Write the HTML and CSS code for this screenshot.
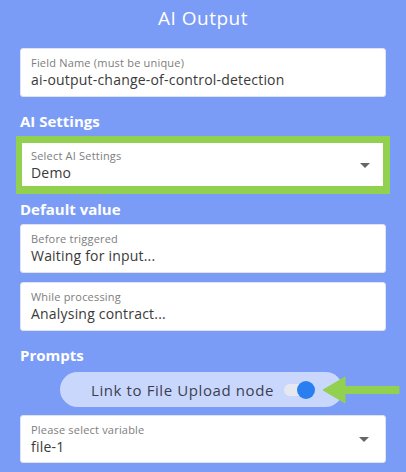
FILE: index.html
```html
<!DOCTYPE html>
<html lang="en">
<head>
  <meta charset="UTF-8" />
  <meta name="viewport" content="width=device-width, initial-scale=1" />
  <title>AI Output</title>
  <link rel="stylesheet" href="styles.css">
</head>
<body>

  <div class="panel">
    <h1 class="title">AI Output</h1>

    <div class="field">
      <label>Field Name (must be unique)</label>
      <div class="value">ai-output-change-of-control-detection</div>
    </div>

    <h2 class="section">AI Settings</h2>
    <div class="highlight">
      <div class="field select">
        <label>Select AI Settings</label>
        <div class="value">Demo</div>
        <span class="caret"></span>
      </div>
    </div>

    <h2 class="section">Default value</h2>
    <div class="field">
      <label>Before triggered</label>
      <div class="value">Waiting for input...</div>
    </div>
    <div class="field">
      <label>While processing</label>
      <div class="value">Analysing contract...</div>
    </div>

    <h2 class="section">Prompts</h2>
    <div class="toggle-row">
      <div class="pill">
        <span>Link to File Upload node</span>
        <span class="switch"><span class="thumb"></span></span>
      </div>
      <svg class="arrow" width="78" height="28" viewBox="0 0 78 28">
        <polygon points="0,14 22,1 22,10.5 76,10.5 76,17.5 22,17.5 22,27" fill="#92d050" stroke="#92d050" stroke-width="1" stroke-linejoin="round"/>
      </svg>
    </div>

    <div class="field select last">
      <label>Please select variable</label>
      <div class="value">file-1</div>
      <span class="caret"></span>
    </div>
  </div>

</body>
</html>
```

FILE: styles.css
```css
body {
  margin: 0;
  padding: 0;
  background-color: #7b9cf6;
  font-family: "Open Sans", Arial, sans-serif;
  overflow: hidden;
}
.panel {
  display: flex;
  flex-direction: column;
  padding: 0 20px;
}
.title {
  margin: 6px 0 0 0;
  height: 42px;
  line-height: 24px;
  text-align: center;
  font-size: 19px;
  font-weight: 500;
  color: #fff;
  letter-spacing: 0.5px;
}
.field {
  position: relative;
  box-sizing: border-box;
  background: #fff;
  border: 1px solid #dfe3ee;
  border-radius: 3px;
  height: 49px;
  padding: 7px 10px 0 10px;
  display: flex;
  flex-direction: column;
  margin-bottom: 9px;
}
.field label {
  font-size: 11px;
  color: #7d7d7d;
  line-height: 14px;
  letter-spacing: 0.2px;
}
.field .value {
  font-size: 14px;
  color: #3a3a3a;
  line-height: 20px;
  letter-spacing: 0.2px;
}
.section {
  margin: 6px 0 6px 0;
  font-size: 15px;
  font-weight: 700;
  color: #fff;
  line-height: 18px;
}
.highlight {
  margin: 0 -4px;
  border-style: solid;
  border-color: #92d050;
  border-width: 7px 7px 8px 6px;
}
.highlight .field {
  margin-bottom: 0;
  border: none;
  border-radius: 0;
  height: 43px;
  padding: 6px 9px 0 9px;
}
.caret {
  position: absolute;
  right: 16px;
  top: 50%;
  margin-top: -2px;
  width: 0;
  height: 0;
  border-left: 5px solid transparent;
  border-right: 5px solid transparent;
  border-top: 5px solid #666;
}
.highlight .caret {
  right: 13px;
}
.toggle-row {
  display: flex;
  align-items: center;
  margin: 2px -20px 8px 40px;
  height: 35px;
}
.pill {
  width: 283px;
  height: 35px;
  border-radius: 18px;
  background: #cad7fc;
  display: flex;
  align-items: center;
  justify-content: center;
  gap: 8px;
  font-size: 15px;
  color: #3a3f52;
  letter-spacing: 0.6px;
}
.switch {
  position: relative;
  width: 28px;
  height: 12px;
  border-radius: 6px;
  background: #e6e8f0;
  margin-left: 2px;
}
.thumb {
  position: absolute;
  right: -3px;
  top: -3px;
  width: 18px;
  height: 18px;
  border-radius: 50%;
  background: #2a7ff0;
}
.arrow {
  margin-left: -20px;
}
.field.last {
  height: 48px;
}
```
